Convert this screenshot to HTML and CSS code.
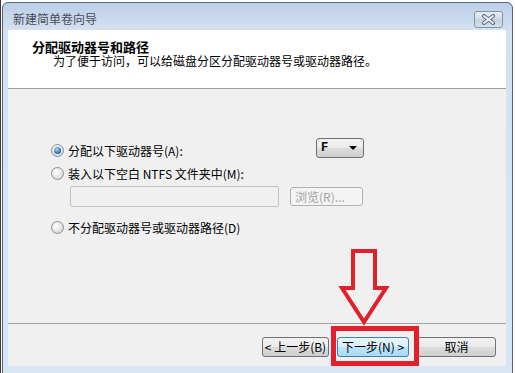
FILE: index.html
```html
<!DOCTYPE html>
<html lang="zh-CN">
  <head>
    <meta charset="UTF-8" />
    <meta name="viewport" content="width=device-width, initial-scale=1.0" />
    <title>新建简单卷向导</title>
    <link rel="stylesheet" href="styles.css">
  </head>
  <body>
    <div class="window">
      <div class="titlebar">
        <span class="title">新建简单卷向导</span>
        <button class="close">
          <svg width="15" height="11" viewBox="0 0 15 11">
            <path d="M3 2 L12 9 M12 2 L3 9" stroke="#5f6e82" stroke-width="4" stroke-linecap="round" />
            <path d="M3 2 L12 9 M12 2 L3 9" stroke="#f4f7fb" stroke-width="1.8" stroke-linecap="round" />
          </svg>
        </button>
      </div>
      <div class="client">
        <section class="header">
          <div class="header-title">分配驱动器号和路径</div>
          <div class="header-sub">为了便于访问，可以给磁盘分区分配驱动器号或驱动器路径。</div>
        </section>
        <section class="body">
          <div class="row">
            <label class="radio-label first">
              <span class="radio checked"></span>分配以下驱动器号(A):
            </label>
            <div class="combo">F<span class="caret"></span></div>
          </div>
          <div class="row">
            <label class="radio-label">
              <span class="radio"></span>装入以下空白 NTFS 文件夹中(M):
            </label>
          </div>
          <div class="row path-row">
            <div class="textbox"></div>
            <button class="btn disabled" disabled>浏览(R)...</button>
          </div>
          <div class="row last">
            <label class="radio-label">
              <span class="radio"></span>不分配驱动器号或驱动器路径(D)
            </label>
          </div>
        </section>
        <section class="footer">
          <button class="btn back">&lt; 上一步(B)</button>
          <button class="btn next">下一步(N) &gt;</button>
          <button class="btn cancel">取消</button>
        </section>
      </div>
    </div>

    <!-- red annotation drawn over the dialog -->
    <div class="mark-box"></div>
    <svg class="mark-arrow" width="54" height="84" viewBox="0 0 54 84">
      <path d="M16 5 L38 5 L38 42 L49 42 L27 76 L5 42 L16 42 Z" fill="none" stroke="#e2202b" stroke-width="4" stroke-linejoin="miter" />
    </svg>
  </body>
</html>
```

FILE: styles.css
```css
* {
  margin: 0;
  padding: 0;
  box-sizing: border-box;
  font-family: "Noto Sans CJK SC", sans-serif;
}

body {
  position: relative;
  width: 515px;
  height: 373px;
  overflow: hidden;
  background-color: #ffffff;
  border-left: 1px solid #3a3a3a;
}

.window {
  margin: 2px 0 0 1px;
  width: 511px;
  height: 380px;
  border: 1px solid #56637a;
  border-radius: 6px 6px 0 0;
  background: linear-gradient(#bccfe7, #d4e1f1 28px, #d8e5f3);
}

.titlebar {
  height: 27px;
  padding: 5px 9px 0 10px;
  display: flex;
  align-items: center;
  justify-content: space-between;
}
.title {
  font-size: 12px;
  line-height: 14px;
  color: #474c55;
}
.close {
  width: 29px;
  height: 17px;
  border: 1px solid #8593a8;
  border-radius: 3px;
  background: linear-gradient(#e6edf6, #d2ddea 50%, #c6d3e3 50%, #d3dfed);
  display: flex;
  align-items: center;
  justify-content: center;
}

.client {
  margin: 0 6px 0 5px;
  width: 498px;
  height: 336px;
  background-color: #f0f0f0;
  display: flex;
  flex-direction: column;
}

.header {
  height: 59px;
  padding: 10px 0 0 24px;
  background-color: #ffffff;
  border-bottom: 1px solid #a0a0a0;
}
.header-title {
  font-size: 13px;
  font-weight: bold;
  line-height: 14px;
  color: #000000;
}
.header-sub {
  font-size: 12px;
  line-height: 14px;
  padding-left: 21px;
  color: #000000;
}

.body {
  height: 235px;
  padding: 51px 0 0 43px;
  border-bottom: 1px solid #a0a0a0;
}
.row {
  display: flex;
  align-items: flex-start;
  margin-top: 3px;
}
.row:first-child {
  margin-top: 0;
}
.row.last {
  margin-top: 10px;
}
.radio-label {
  display: flex;
  align-items: center;
  gap: 4px;
  height: 20px;
  font-size: 12px;
  color: #000000;
}
.radio-label.first {
  width: 265px;
}
.radio {
  width: 13px;
  height: 13px;
  border-radius: 50%;
  border: 1px solid #8f8f8f;
  background: radial-gradient(circle at 40% 35%, #ffffff, #dcdcdc 70%, #c8c8c8);
  display: flex;
  align-items: center;
  justify-content: center;
}
.radio.checked::after {
  content: "";
  width: 7px;
  height: 7px;
  border-radius: 50%;
  background: radial-gradient(circle at 40% 35%, #a8dcf8, #2a6fb0 65%, #133f73);
}

.combo {
  position: relative;
  width: 48px;
  height: 20px;
  margin-top: -2px;
  padding-left: 4px;
  border: 1px solid #707070;
  border-radius: 3px;
  background: linear-gradient(#f2f2f2, #ebebeb 50%, #dddddd 50%, #cfcfcf);
  font-family: "Liberation Mono", monospace;
  font-size: 12px;
  font-weight: bold;
  line-height: 18px;
}
.caret {
  position: absolute;
  right: 6px;
  top: 7px;
  border-left: 4px solid transparent;
  border-right: 4px solid transparent;
  border-top: 4px solid #000000;
}

.path-row {
  padding-left: 19px;
}
.textbox {
  width: 209px;
  height: 21px;
  border: 1px solid #c2c2c2;
  border-radius: 2px;
  background-color: #f0f0f0;
}

.btn {
  height: 20px;
  border: 1px solid #707070;
  border-radius: 3px;
  background: linear-gradient(#f2f2f2, #ebebeb 50%, #dddddd 50%, #cfcfcf);
  font-size: 12px;
  line-height: 18px;
  color: #000000;
}
.btn.disabled {
  width: 73px;
  height: 19px;
  margin: 1px 0 0 11px;
  border-color: #adb2b5;
  background: #f4f4f4;
  color: #a3a3a3;
  text-align: left;
  padding-left: 4px;
}

.footer {
  flex: 1;
  padding: 13px 10px 0 0;
  display: flex;
  align-items: flex-start;
  justify-content: flex-end;
  gap: 8px;
}
.back {
  width: 67px;
}
.next {
  width: 72px;
  border-color: #3c7fb1;
  background: linear-gradient(#eaf6fd, #d9f0fc 50%, #bee6fd 50%, #a7d9f5);
}
.cancel {
  width: 79px;
}

.mark-box {
  position: absolute;
  left: 330px;
  top: 326px;
  width: 88px;
  height: 40px;
  border: 5px solid #e2202b;
}
.mark-arrow {
  position: absolute;
  left: 336px;
  top: 246px;
}
```
